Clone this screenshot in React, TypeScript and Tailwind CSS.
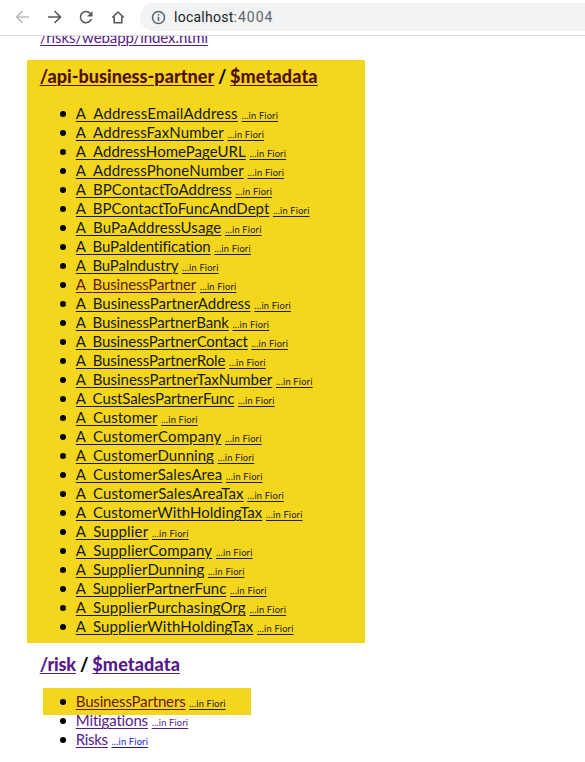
import { useLayoutEffect, useRef } from "react";
import type { ReactNode } from "react";

/** Link whose tracking is adjusted so that its text spans the given width. */
function FitLink({ text, width, className = "" }: { text: string; width: number; className?: string }) {
  const ref = useRef<HTMLAnchorElement>(null);
  useLayoutEffect(() => {
    const el = ref.current;
    if (!el) return;
    const fit = () => {
      el.style.letterSpacing = "0px";
      const natural = el.getBoundingClientRect().width;
      el.style.letterSpacing = `${(width - natural) / text.length}px`;
    };
    fit();
    document.fonts.ready.then(fit);
  }, [text, width]);
  const cut = text.indexOf("_");
  return (
    <a ref={ref} className={`inline-block whitespace-nowrap underline decoration-1 decoration-current underline-offset-2 ${className}`}>
      {cut < 0 ? (
        text
      ) : (
        <>
          {text.slice(0, cut)}
          {/* the underscore merges with the underline */}
          <span className="text-transparent [text-decoration-skip-ink:none]">_</span>
          {text.slice(cut + 1)}
        </>
      )}
    </a>
  );
}

type Item = { name: string; width: number; color?: string; fiori?: string };

const partnerItems: Item[] = [
  { name: "A_AddressEmailAddress", width: 162 },
  { name: "A_AddressFaxNumber", width: 148 },
  { name: "A_AddressHomePageURL", width: 170 },
  { name: "A_AddressPhoneNumber", width: 168 },
  { name: "A_BPContactToAddress", width: 156 },
  { name: "A_BPContactToFuncAndDept", width: 193.5 },
  { name: "A_BuPaAddressUsage", width: 145.5 },
  { name: "A_BuPaIdentification", width: 135 },
  { name: "A_BuPaIndustry", width: 102.5 },
  { name: "A_BusinessPartner", width: 120.3, color: "text-[#651a10]" },
  { name: "A_BusinessPartnerAddress", width: 174.8 },
  { name: "A_BusinessPartnerBank", width: 153 },
  { name: "A_BusinessPartnerContact", width: 172 },
  { name: "A_BusinessPartnerRole", width: 149.5 },
  { name: "A_BusinessPartnerTaxNumber", width: 196.5 },
  { name: "A_CustSalesPartnerFunc", width: 158.5 },
  { name: "A_Customer", width: 81.7 },
  { name: "A_CustomerCompany", width: 145.5 },
  { name: "A_CustomerDunning", width: 138.2 },
  { name: "A_CustomerSalesArea", width: 146.5 },
  { name: "A_CustomerSalesAreaTax", width: 167.8 },
  { name: "A_CustomerWithHoldingTax", width: 186.5 },
  { name: "A_Supplier", width: 72.5 },
  { name: "A_SupplierCompany", width: 136.5 },
  { name: "A_SupplierDunning", width: 128.5 },
  { name: "A_SupplierPartnerFunc", width: 150.5 },
  { name: "A_SupplierPurchasingOrg", width: 170 },
  { name: "A_SupplierWithHoldingTax", width: 177.5 },
];

function Row({ name, width, color = "text-[#151b13]", fiori = "text-[#1c2018]" }: Item) {
  return (
    <li className="flex h-[19px] items-baseline text-[15px] leading-[19px]">
      <span className="mr-[10px] size-[6px] shrink-0 -translate-y-[2px] rounded-full bg-black" />
      <FitLink text={name} width={width} className={color} />
      <FitLink text="...in Fiori" width={36.6} className={`ml-[3.7px] text-[9.25px] ${fiori}`} />
    </li>
  );
}

function Heading({ children }: { children: ReactNode }) {
  return <h3 className="flex h-6 items-baseline text-[18px] leading-6 font-black text-black">{children}</h3>;
}

function Toolbar() {
  return (
    <header className="flex h-9 shrink-0 items-start border-b border-[#dcdde0] bg-white">
      <svg className="mt-[9px] ml-[14px] h-4 w-[112px] shrink-0" viewBox="14 9 112 16" fill="none" strokeWidth="1.6">
        <path d="M29 17H17M22.5 11L16.5 17l6 6" stroke="#b9bbbe" />
        <path d="M48 17h12M54.5 11l6 6-6 6" stroke="#55585d" />
        <path d="M90.3 13.5A5.6 5.6 0 1 0 91.3 19" stroke="#55585d" />
        <path d="M92.5 11v5.5H87Z" fill="#55585d" />
        <path d="M112.3 17.5L118 12l5.7 5.5M114.2 16.5v6.2h7.6v-6.2" stroke="#55585d" />
      </svg>
      <div className="mt-[3px] ml-[14px] flex h-7 flex-1 items-center rounded-l-full bg-[#f1f3f4] pl-[11px]">
        <svg className="size-[15px] shrink-0" viewBox="0 0 15 15" fill="none" stroke="#5f6368" strokeWidth="1.5">
          <circle cx="7.5" cy="7.5" r="6" />
          <path d="M7.5 6.8V11M7.5 4.1v1.4" />
        </svg>
        <span className="ml-2 font-[Roboto,sans-serif] text-[14px] leading-5 text-[#5f6368]">
          <FitLink text="localhost" width={59.5} className="text-[#202124] !no-underline" />
          <FitLink text=":4004" width={40} className="!no-underline" />
        </span>
      </div>
    </header>
  );
}

export default function App() {
  return (
    <div className="flex h-[762px] w-[585px] flex-col overflow-hidden bg-white font-[Lato,sans-serif]">
      <Toolbar />
      <main className="flex-1 overflow-hidden">
        <div className="-mt-2 h-8 pl-10 text-[15px] leading-[19px] text-[#551a8b]">
          <FitLink text="/risks/webapp/index.html" width={168} />
        </div>
        <section className="ml-[27px] h-[583px] w-[338px] bg-[#f5d61e] pt-1 pl-[12.7px]">
          <Heading>
            <FitLink text="/api-business-partner" width={174.6} className="text-[#521008]" />
            <span className="w-[15.7px] text-center">/</span>
            <FitLink text="$metadata" width={87.7} className="text-[#521008]" />
          </Heading>
          <ul className="mt-4 pl-[20.1px]">
            {partnerItems.map((item) => (
              <Row key={item.name} {...item} />
            ))}
          </ul>
        </section>
        <section className="pt-[9px] pl-[39.7px]">
          <Heading>
            <FitLink text="/risk" width={36.3} className="text-[#551a8b]" />
            <span className="w-[16.3px] text-center">/</span>
            <FitLink text="$metadata" width={87.7} className="text-[#551a8b]" />
          </Heading>
          <div className="mt-3">
            <ul className="ml-[3.7px] h-[27px] w-[208px] bg-[#f5d61e] pt-1 pl-[16.4px]">
              <Row name="BusinessPartners" width={109.7} color="text-[#651a10]" />
            </ul>
            <ul className="-mt-1 pl-[20.1px]">
              <Row name="Mitigations" width={72.7} color="text-[#551a8b]" fiori="text-[#551a8b]" />
              <Row name="Risks" width={32} color="text-[#551a8b]" fiori="text-[#1414ee]" />
            </ul>
          </div>
        </section>
      </main>
    </div>
  );
}
